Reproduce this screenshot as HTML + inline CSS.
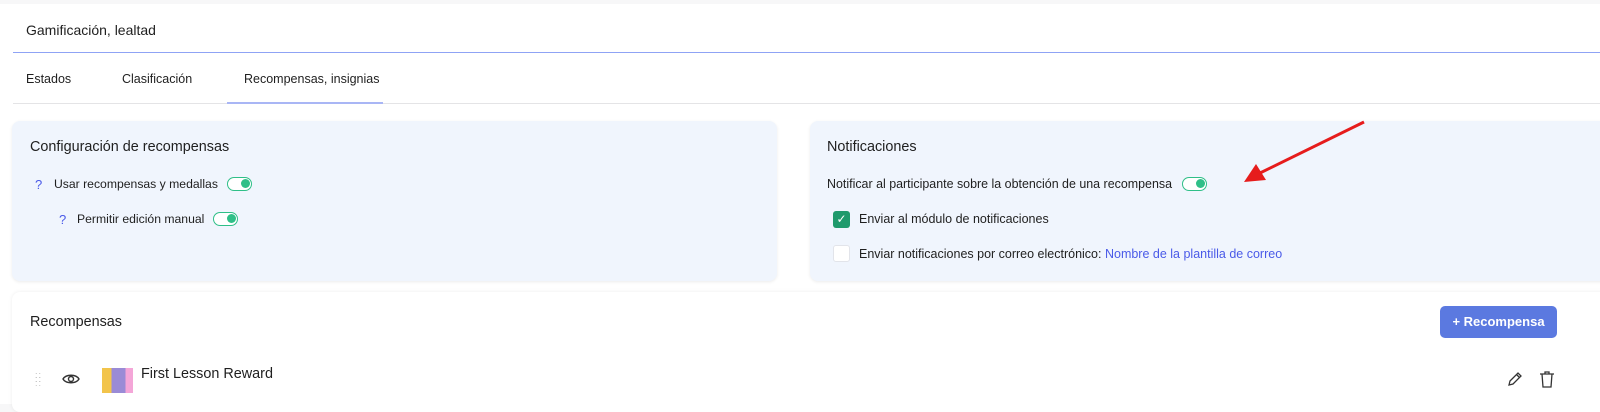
<!DOCTYPE html>
<html><head><meta charset="utf-8"><style>
*{box-sizing:border-box;margin:0;padding:0}
body{width:1600px;height:401px;overflow:hidden;background:#f7f7f8;font-family:"Liberation Sans",sans-serif;color:#1f1f1f;position:relative}
.main{position:absolute;left:0;top:4px;width:1600px;height:400px;background:#fff}
.abs{position:absolute;white-space:nowrap}
.card{position:absolute;background:#f0f5fd;border-radius:8px;box-shadow:0 1px 3px rgba(0,0,0,.08)}
.tog{position:absolute;width:25px;height:14px;border:1.5px solid #2fbf88;border-radius:8px;background:#fff}
.tog:after{content:"";position:absolute;right:1.5px;top:1px;width:9px;height:9px;border-radius:50%;background:#2fbf88}
.q{color:#4a5ae8;font-size:13px}
.t13{font-size:12.2px}
</style></head><body>
<div class="main"></div>
<div class="abs" style="left:26px;top:22px;font-size:14px">Gamificación, lealtad</div>
<div class="abs" style="left:13px;top:52px;width:1587px;height:1px;background:#8fa3f5"></div>
<div class="abs" style="left:26px;top:72px;font-size:12.5px">Estados</div>
<div class="abs" style="left:122px;top:72px;font-size:12.5px">Clasificación</div>
<div class="abs" style="left:244px;top:72px;font-size:12.5px">Recompensas, insignias</div>
<div class="abs" style="left:13px;top:103px;width:1587px;height:1px;background:#e4e4e6"></div>
<div class="abs" style="left:227px;top:102px;width:156px;height:2px;background:#a9b6f5"></div>

<div class="card" style="left:12px;top:121px;width:765px;height:160px"></div>
<div class="abs" style="left:30px;top:139px;font-size:14.4px">Configuración de recompensas</div>
<div class="abs q" style="left:35px;top:177px">?</div>
<div class="abs t13" style="left:54px;top:177px">Usar recompensas y medallas</div>
<div class="tog" style="left:227px;top:177px"></div>
<div class="abs q" style="left:59px;top:212px">?</div>
<div class="abs t13" style="left:77px;top:212px">Permitir edición manual</div>
<div class="tog" style="left:213px;top:212px"></div>

<div class="card" style="left:810px;top:121px;width:800px;height:160px"></div>
<div class="abs" style="left:827px;top:139px;font-size:14.4px">Notificaciones</div>
<div class="abs" style="left:827px;top:177px;font-size:12.45px">Notificar al participante sobre la obtención de una recompensa</div>
<div class="tog" style="left:1182px;top:177px"></div>
<div class="abs" style="left:833px;top:211px;width:17px;height:17px;border-radius:3px;background:#1f9a6c;color:#fff;font-size:12px;text-align:center;line-height:17px">✓</div>
<div class="abs" style="left:859px;top:212px;font-size:12.5px">Enviar al módulo de notificaciones</div>
<div class="abs" style="left:833px;top:245px;width:17px;height:17px;border-radius:3px;background:#fff;border:1px solid #e2e4ea"></div>
<div class="abs" style="left:859px;top:247px;font-size:12.5px">Enviar notificaciones por correo electrónico: <span style="color:#4a5ae8">Nombre de la plantilla de correo</span></div>

<svg class="abs" style="left:0;top:0" width="1600" height="401"><line x1="1364" y1="122" x2="1258" y2="174" stroke="#e61c1c" stroke-width="3"/><polygon points="1244,182 1256,164 1266,180" fill="#e61c1c"/></svg>

<div class="abs" style="left:12px;top:292px;width:1600px;height:120px;background:#fff;border-radius:8px;box-shadow:0 0 4px rgba(0,0,0,.07)"></div>
<div class="abs" style="left:30px;top:314px;font-size:14.4px">Recompensas</div>
<div class="abs" style="left:1440px;top:306px;width:117px;height:32px;border-radius:5px;background:#5b79e0;color:#fff;font-weight:bold;font-size:13px;text-align:center;line-height:32px">+ Recompensa</div>
<div class="abs" style="left:35px;top:373px;color:#bbb;font-size:9px;line-height:4px;letter-spacing:1px">::<br>::<br>::</div>
<svg class="abs" style="left:62px;top:372px" width="18" height="14" viewBox="0 0 18 14"><path d="M1 7C4 2 14 2 17 7C14 12 4 12 1 7Z" fill="none" stroke="#333" stroke-width="1.4"/><circle cx="9" cy="7" r="2.5" fill="none" stroke="#333" stroke-width="1.4"/></svg>
<div class="abs" style="left:102px;top:368px;width:31px;height:25px;background:linear-gradient(90deg,#f2c44b 0 30%,#9a8bd6 30% 75%,#f4a6d8 75%)"></div>
<div class="abs" style="left:141px;top:366px;font-size:14.4px">First Lesson Reward</div>
<svg class="abs" style="left:1506px;top:370px" width="18" height="18" viewBox="0 0 18 18"><path d="M3 15L4 11L12 3L15 6L7 14Z M10.5 4.5L13.5 7.5" fill="none" stroke="#333" stroke-width="1.3"/></svg>
<svg class="abs" style="left:1539px;top:370px" width="16" height="18" viewBox="0 0 16 18"><path d="M1 4H15M6 4V2H10V4M3 4L4 17H12L13 4" fill="none" stroke="#333" stroke-width="1.3"/></svg>
</body></html>
